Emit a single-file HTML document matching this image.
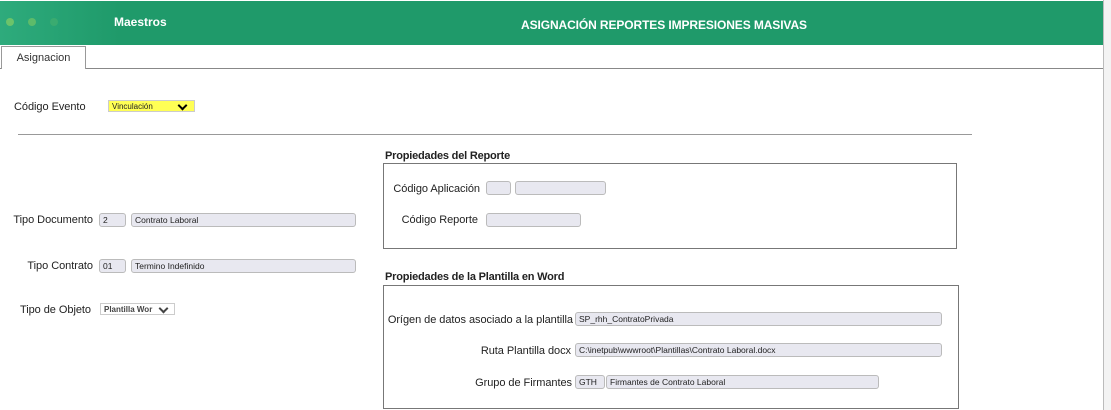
<!DOCTYPE html><html><head><meta charset="utf-8"><style>
body{margin:0;width:1111px;height:410px;background:#fff;position:relative;overflow:hidden;font-family:"Liberation Sans",sans-serif;font-size:11px;color:#222}
.a{position:absolute}
.in{position:absolute;height:12px;border:1px solid #bbb;border-radius:3px;background:#e8e8f0;font-size:8.5px;line-height:12px;padding-left:3px;box-sizing:content-box;color:#222;white-space:nowrap}
.lb{position:absolute;font-size:11px;white-space:nowrap;text-align:right;letter-spacing:-0.05px}
.h{position:absolute;font-weight:bold;font-size:11px;letter-spacing:-0.2px}
.box{position:absolute;border:1px solid #777}
.chev{position:absolute;top:2px;width:5px;height:5px;border-right:2px solid #000;border-bottom:2px solid #000;transform:rotate(45deg)}
</style></head><body>
<div class="a" style="left:0;top:1px;width:1103px;height:44px;background:#1f9a6a"></div>
<div class="a" style="left:0;top:1px;width:120px;height:44px;background:linear-gradient(90deg,#2eab7c,#1f9a6a)"></div>
<div class="a" style="left:6px;top:18px;width:8px;height:8px;border-radius:50%;background:#6cc36a"></div>
<div class="a" style="left:28px;top:18px;width:8px;height:8px;border-radius:50%;background:#5dbb6a"></div>
<div class="a" style="left:50px;top:18px;width:8px;height:8px;border-radius:50%;background:#3aab70"></div>
<div class="a" style="left:114px;top:15px;color:#fff;font-weight:bold;font-size:12px">Maestros</div>
<div class="a" style="left:521px;top:18px;color:#fff;font-weight:bold;font-size:12px;letter-spacing:-0.1px">ASIGNACIÓN REPORTES IMPRESIONES MASIVAS</div>
<div class="a" style="left:1103px;top:0;width:8px;height:410px;background:#f3f3f3;border-left:1px solid #bbb"></div>
<div class="a" style="left:0;top:68px;width:1103px;height:1px;background:#888"></div>
<div class="a" style="left:1px;top:46px;width:83px;height:22px;border:1px solid #999;border-bottom:none;background:#fff;font-size:11px;text-align:center;line-height:22px;color:#333">Asignacion</div>
<div class="lb" style="left:14px;top:101px">Código Evento</div>
<div class="a" style="left:108px;top:100px;width:87px;height:12px;background:#ffff55;border:1px solid #ccc;font-size:8px;line-height:11px;padding-left:3px;box-sizing:border-box">Vinculación<span class="chev" style="right:8px;top:1px"></span></div>
<div class="a" style="left:18px;top:134px;width:954px;height:1px;background:#999"></div>
<div class="lb" style="right:1018px;top:214px">Tipo Documento</div>
<div class="in" style="left:99px;top:213px;width:22px">2</div>
<div class="in" style="left:131px;top:213px;width:220px">Contrato Laboral</div>
<div class="lb" style="right:1018px;top:260px">Tipo Contrato</div>
<div class="in" style="left:99px;top:259px;width:22px">01</div>
<div class="in" style="left:131px;top:259px;width:220px">Termino Indefinido</div>
<div class="lb" style="right:1020px;top:304px">Tipo de Objeto</div>
<div class="a" style="left:100px;top:303px;width:75px;height:12px;border:1px solid #ccc;font-size:8px;line-height:11px;padding-left:3px;box-sizing:border-box;color:#444;font-weight:bold">Plantilla Wor<span class="chev" style="right:7px;top:1px;border-color:#444"></span></div>
<div class="h" style="left:385px;top:150px">Propiedades del Reporte</div>
<div class="box" style="left:383px;top:163px;width:572px;height:84px"></div>
<div class="lb" style="right:631px;top:183px">Código Aplicación</div>
<div class="in" style="left:486px;top:181px;width:20px"></div>
<div class="in" style="left:515px;top:181px;width:86px"></div>
<div class="lb" style="right:633px;top:214px">Código Reporte</div>
<div class="in" style="left:486px;top:213px;width:90px"></div>
<div class="h" style="left:385px;top:271px">Propiedades de la Plantilla en Word</div>
<div class="box" style="left:383px;top:285px;width:574px;height:122px"></div>
<div class="lb" style="right:538px;top:314px">Orígen de datos asociado a la plantilla</div>
<div class="in" style="left:575px;top:312px;width:362px">SP_rhh_ContratoPrivada</div>
<div class="lb" style="right:540px;top:345px">Ruta Plantilla docx</div>
<div class="in" style="left:575px;top:343px;width:362px">C:\inetpub\wwwroot\Plantillas\Contrato Laboral.docx</div>
<div class="lb" style="right:539px;top:377px">Grupo de Firmantes</div>
<div class="in" style="left:575px;top:375px;width:25px">GTH</div>
<div class="in" style="left:606px;top:375px;width:268px">Firmantes de Contrato Laboral</div>
</body></html>
